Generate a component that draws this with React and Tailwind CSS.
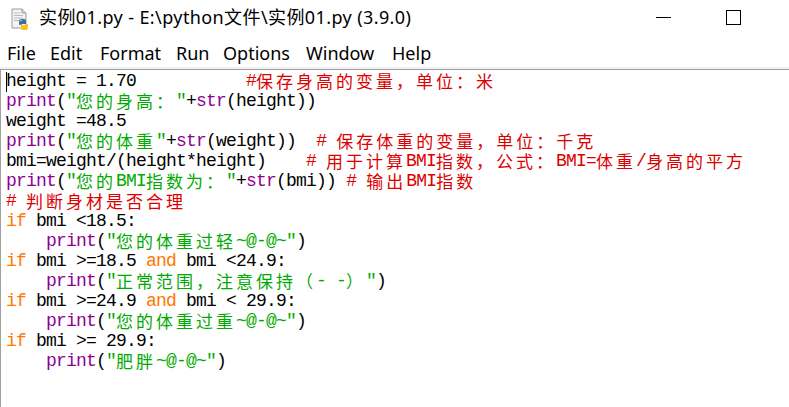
import React from "react";

const C = {
  k: "text-[#ff7700]",
  b: "text-[#900090]",
  s: "text-[#00aa00]",
  c: "text-[#dd0000]",
  n: "text-black",
};

const lines = [
  [["n", "height = 1.70           "], ["c", "#保存身高的变量，单位：米"]],
  [["b", "print"], ["n", "("], ["s", "\"您的身高：\""], ["n", "+"], ["b", "str"], ["n", "(height))"]],
  [["n", "weight =48.5"]],
  [["b", "print"], ["n", "("], ["s", "\"您的体重\""], ["n", "+"], ["b", "str"], ["n", "(weight))  "], ["c", "# 保存体重的变量，单位：千克"]],
  [["n", "bmi=weight/(height*height)    "], ["c", "# 用于计算BMI指数，公式：BMI=体重/身高的平方"]],
  [["b", "print"], ["n", "("], ["s", "\"您的BMI指数为：\""], ["n", "+"], ["b", "str"], ["n", "(bmi)) "], ["c", "# 输出BMI指数"]],
  [["c", "# 判断身材是否合理"]],
  [["k", "if"], ["n", " bmi <18.5:"]],
  [["n", "    "], ["b", "print"], ["n", "("], ["s", "\"您的体重过轻~@-@~\""], ["n", ")"]],
  [["k", "if"], ["n", " bmi >=18.5 "], ["k", "and"], ["n", " bmi <24.9:"]],
  [["n", "    "], ["b", "print"], ["n", "("], ["s", "\"正常范围，注意保持（- -）\""], ["n", ")"]],
  [["k", "if"], ["n", " bmi >=24.9 "], ["k", "and"], ["n", " bmi < 29.9:"]],
  [["n", "    "], ["b", "print"], ["n", "("], ["s", "\"您的体重过重~@-@~\""], ["n", ")"]],
  [["k", "if"], ["n", " bmi >= 29.9:"]],
  [["n", "    "], ["b", "print"], ["n", "("], ["s", "\"肥胖~@-@~\""], ["n", ")"]],
];

function splitRuns(text) {
  const runs = [];
  let cur = "";
  let wide = null;
  for (const ch of text) {
    const w = /[\u2E80-\uFFEF]/.test(ch);
    if (wide === null) wide = w;
    if (w !== wide) {
      runs.push([wide, cur]);
      cur = "";
      wide = w;
    }
    cur += ch;
  }
  if (cur) runs.push([wide, cur]);
  return runs;
}

function Token({ type, text }) {
  return (
    <span className={C[type]}>
      {splitRuns(text).map(([w, t], i) =>
        w ? (
          <span
            key={i}
            className="inline-block h-[20px] align-top leading-[20px] font-['Noto_Sans_CJK_SC',sans-serif] text-[17px] tracking-[3px]"
          >
            {t}
          </span>
        ) : (
          <span key={i}>{t}</span>
        )
      )}
    </span>
  );
}

function FileIcon() {
  return (
    <svg width="20" height="22" viewBox="0 0 20 22">
      <path d="M2 1 H12 L16 5 V20 H2 Z" fill="#f4f4f4" stroke="#9a9a9a" strokeWidth="1" />
      <path d="M12 1 V5 H16" fill="#dcdcdc" stroke="#9a9a9a" strokeWidth="1" />
      <path d="M4 5 H10 M4 7.5 H13 M4 10 H13 M4 12.5 H9" stroke="#b8b8b8" strokeWidth="1" />
      <path d="M9 13.5 C9 11.5 10 11 12 11 H14 C15.5 11 16 12 16 13 V16 H12 V16.8 H9 Z" fill="#3a6ea5" />
      <path d="M17.5 21 C17.5 22 16.5 22 15 22 H13 C11.5 22 11 21 11 20 V17 H15 V16.2 H18 V19 Z" fill="#f5c518" />
      <circle cx="11" cy="12.5" r="0.7" fill="#fff" />
    </svg>
  );
}

export default function App() {
  return (
    <div className="w-[789px] h-[407px] bg-white overflow-hidden flex flex-col">
      {/* Title bar */}
      <div className="h-[36px] flex items-center bg-white shrink-0">
        <div className="ml-[10px] mt-[1px] flex items-center">
          <FileIcon />
        </div>
        <span className="ml-[9px] mt-[-2px] shrink-0 whitespace-nowrap text-[18px] tracking-[0.4px] text-black font-['Noto_Sans','Noto_Sans_CJK_SC',sans-serif] leading-none">
          实例01.py - E:\python文件\实例01.py (3.9.0)
        </span>
        <div className="ml-auto flex h-full pr-[33px]">
          <div className="w-[46px] h-full flex items-center justify-center">
            <div className="w-[15px] h-px bg-black mt-[-1px]" />
          </div>
          <div className="w-[24px]" />
          <div className="w-[46px] h-full flex items-center justify-center">
            <div className="w-[15px] h-[15px] border border-black mt-[-2px]" />
          </div>
        </div>
      </div>
      {/* Menu bar */}
      <div className="h-[31px] flex items-center pl-[7px] pt-[4px] text-[18px] text-black font-['Noto_Sans',sans-serif] shrink-0">
        <span className="w-[43px]">File</span>
        <span className="w-[50px]">Edit</span>
        <span className="w-[76px]">Format</span>
        <span className="w-[47px]">Run</span>
        <span className="w-[83px]">Options</span>
        <span className="w-[86px]">Window</span>
        <span>Help</span>
      </div>
      <div className="h-[2px] bg-[#f0f0f0] shrink-0" />
      {/* Editor */}
      <div className="flex-1 border-t border-l border-[#a0a0a0] pt-[1px] pl-[5px] font-['Liberation_Mono',monospace] text-[18px] tracking-[-0.8px] leading-[20px]">
        {lines.map((toks, i) => (
          <div key={i} className="relative h-[20px] whitespace-pre">
            {i === 0 && <span className="absolute left-0 top-px w-px h-[20px] bg-black" />}
            {toks.map(([t, s], j) => (
              <Token key={j} type={t} text={s} />
            ))}
          </div>
        ))}
      </div>
    </div>
  );
}
